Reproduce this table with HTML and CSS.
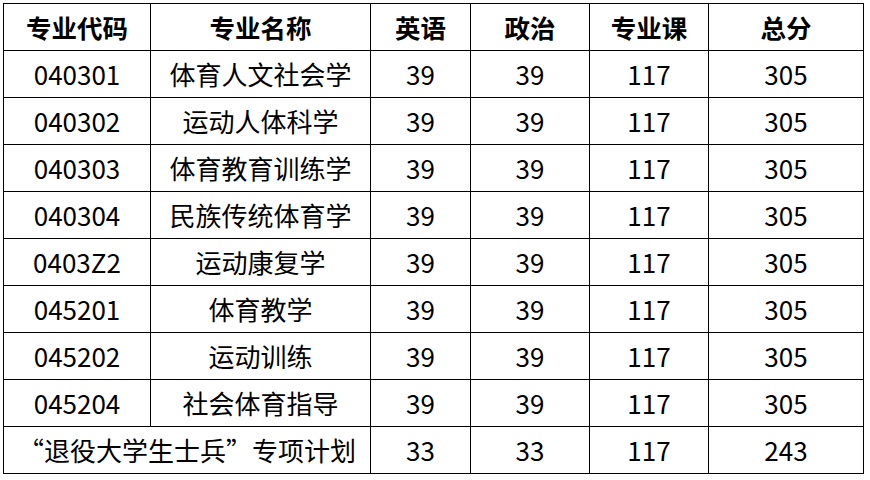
FILE: index.html
```html
<!DOCTYPE html>
<html lang="zh">
<head>
<meta charset="utf-8">
<link rel="stylesheet" href="styles.css">
</head>
<body>
<table class="score-table">
  <colgroup>
    <col class="c1"><col class="c2"><col class="c3"><col class="c4"><col class="c5"><col class="c6">
  </colgroup>
  <thead>
    <tr><th>专业代码</th><th>专业名称</th><th>英语</th><th>政治</th><th>专业课</th><th>总分</th></tr>
  </thead>
  <tbody>
    <tr><td>040301</td><td>体育人文社会学</td><td>39</td><td>39</td><td>117</td><td>305</td></tr>
    <tr><td>040302</td><td>运动人体科学</td><td>39</td><td>39</td><td>117</td><td>305</td></tr>
    <tr><td>040303</td><td>体育教育训练学</td><td>39</td><td>39</td><td>117</td><td>305</td></tr>
    <tr><td>040304</td><td>民族传统体育学</td><td>39</td><td>39</td><td>117</td><td>305</td></tr>
    <tr><td>0403Z2</td><td>运动康复学</td><td>39</td><td>39</td><td>117</td><td>305</td></tr>
    <tr><td>045201</td><td>体育教学</td><td>39</td><td>39</td><td>117</td><td>305</td></tr>
    <tr><td>045202</td><td>运动训练</td><td>39</td><td>39</td><td>117</td><td>305</td></tr>
    <tr><td>045204</td><td>社会体育指导</td><td>39</td><td>39</td><td>117</td><td>305</td></tr>
    <tr><td colspan="2">“退役大学生士兵”专项计划</td><td>33</td><td>33</td><td>117</td><td>243</td></tr>
  </tbody>
</table>
</body>
</html>
```

FILE: styles.css
```css
html, body {
  margin: 0;
  padding: 0;
  background: #fff;
}
body {
  padding: 3px 0 0 3px;
  font-family: "Noto Sans CJK SC", "Noto Sans", sans-serif;
  color: #000;
}
.score-table {
  border-collapse: collapse;
  table-layout: fixed;
  width: 861px;
}
.c1 { width: 147px; }
.c2 { width: 220px; }
.c3 { width: 100px; }
.c4 { width: 119px; }
.c5 { width: 119px; }
.c6 { width: 155px; }
.score-table th,
.score-table td {
  border: 1px solid #000;
  height: 46px;
  padding: 0;
  text-align: center;
  vertical-align: middle;
  font-size: 26px;
  line-height: 1;
  white-space: nowrap;
}
.score-table th {
  font-weight: 700;
  font-size: 25.5px;
}
.score-table td {
  font-weight: 400;
}
```
